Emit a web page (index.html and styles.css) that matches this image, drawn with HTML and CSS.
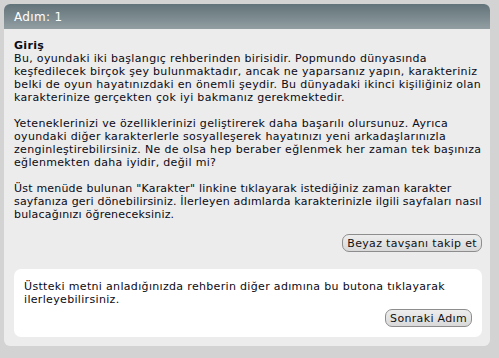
FILE: index.html
```html
<!DOCTYPE html>
<html lang="tr">
<head>
    <meta charset="UTF-8">
    <meta name="viewport" content="width=device-width, initial-scale=1.0">
    <title>Adım: 1</title>
    <link rel="stylesheet" href="styles.css">
</head>
<body>
    <div class="box">
        <div class="box-header">Adım: 1</div>
        <div class="box-body">
            <p class="intro">
                <strong>Giriş</strong><br>
                Bu, oyundaki iki başlangıç rehberinden birisidir. Popmundo dünyasında keşfedilecek birçok şey bulunmaktadır, ancak ne yaparsanız yapın, karakteriniz belki de oyun hayatınızdaki en önemli şeydir. Bu dünyadaki ikinci kişiliğiniz olan karakterinize gerçekten çok iyi bakmanız gerekmektedir.
            </p>
            <p>
                Yeteneklerinizi ve özelliklerinizi geliştirerek daha başarılı olursunuz. Ayrıca oyundaki diğer karakterlerle sosyalleşerek hayatınızı yeni arkadaşlarınızla zenginleştirebilirsiniz. Ne de olsa hep beraber eğlenmek her zaman tek başınıza eğlenmekten daha iyidir, değil mi?
            </p>
            <p class="tight">
                Üst menüde bulunan "Karakter" linkine tıklayarak istediğiniz zaman karakter sayfanıza geri dönebilirsiniz. İlerleyen adımlarda karakterinizle ilgili sayfaları nasıl bulacağınızı öğreneceksiniz.
            </p>
            <div class="actions">
                <button class="btn">Beyaz tavşanı takip et</button>
            </div>
            <div class="next-box">
                <p>Üstteki metni anladığınızda rehberin diğer adımına bu butona tıklayarak ilerleyebilirsiniz.</p>
                <div class="actions">
                    <button class="btn">Sonraki Adım</button>
                </div>
            </div>
        </div>
    </div>
</body>
</html>
```

FILE: styles.css
```css
body {
    margin: 0;
    padding: 4px;
    background-color: #d3d3d3;
    font-family: "DejaVu Sans", Verdana, sans-serif;
    font-size: 11px;
    line-height: 13px;
    letter-spacing: 0.33px;
    color: #0a0a14;
}
.box {
    width: 486px;
    background-color: #ececec;
    border-radius: 6px;
    overflow: hidden;
}
.box-header {
    height: 25px;
    line-height: 26px;
    padding-left: 10px;
    font-size: 12px;
    color: #ffffff;
    background: linear-gradient(to bottom, #627379, #929ea2);
}
.box-body {
    padding: 10px 2px 9px 10px;
}
.box-body p {
    margin: 0 0 13px 0;
}
.box-body p.tight {
    letter-spacing: 0.2px;
}
.actions {
    display: flex;
    justify-content: flex-end;
}
.btn {
    font-family: "DejaVu Sans", Verdana, sans-serif;
    font-size: 11px;
    letter-spacing: 0.33px;
    color: #111;
    height: 18px;
    padding: 0 4px;
    border: 1px solid #8d8d8d;
    border-radius: 7px;
    background: linear-gradient(to bottom, #ededed, #d9d9d9);
}
.box-body > .actions {
    margin-top: 2px;
    margin-right: 6px;
}
.next-box {
    margin-top: 17px;
    margin-right: 6px;
    background-color: #ffffff;
    border-radius: 7px;
    padding: 11px 10px 10px 10px;
}
.next-box p {
    margin: 0 0 3px 0;
}
```
